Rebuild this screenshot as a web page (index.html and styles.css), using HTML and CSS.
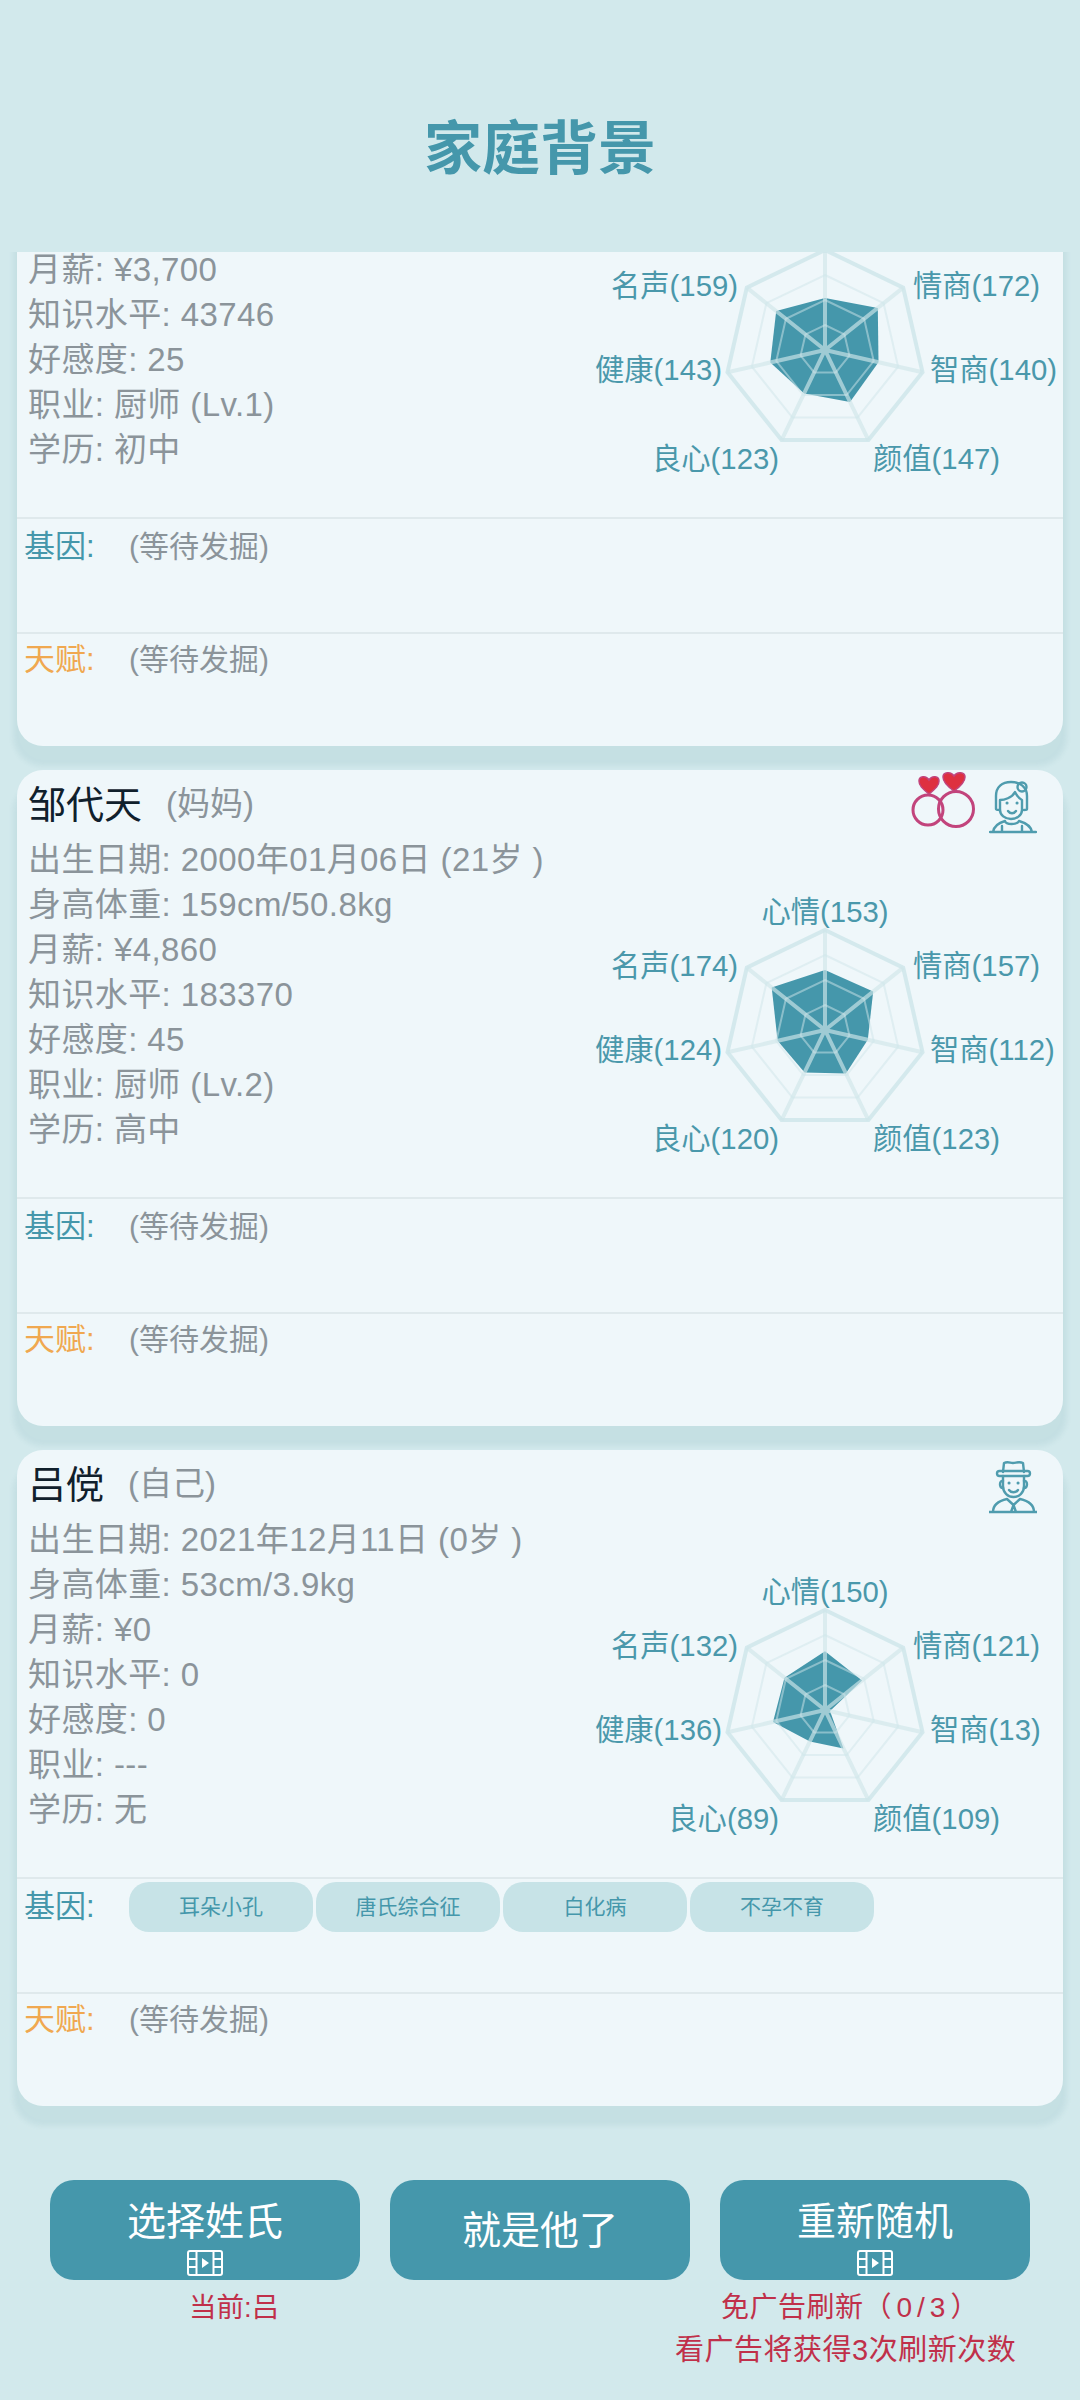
FILE: index.html
```html
<!DOCTYPE html>
<html lang="zh-CN">
<head>
    <meta charset="UTF-8">
    <title>家庭背景</title>
    <link rel="stylesheet" href="styles.css">
</head>
<body>
<svg class="defs" width="0" height="0">
    <defs>
        <g id="radarGrid">
            <polygon class="ring ring-outer" points="0,-100 78.2,-62.4 97.5,22.3 43.4,90.1 -43.4,90.1 -97.5,22.3 -78.2,-62.4"/>
            <polygon class="ring" points="0,-75 58.6,-46.8 73.1,16.7 32.5,67.6 -32.5,67.6 -73.1,16.7 -58.6,-46.8"/>
            <polygon class="ring" points="0,-50 39.1,-31.2 48.7,11.1 21.7,45 -21.7,45 -48.7,11.1 -39.1,-31.2"/>
            <polygon class="ring" points="0,-25 19.5,-15.6 24.4,5.6 10.8,22.5 -10.8,22.5 -24.4,5.6 -19.5,-15.6"/>
            <path class="spoke" d="M0 0L0 -100M0 0L78.2 -62.4M0 0L97.5 22.3M0 0L43.4 90.1M0 0L-43.4 90.1M0 0L-97.5 22.3M0 0L-78.2 -62.4"/>
        </g>
        <g id="filmIcon">
            <rect x="1" y="1" width="34" height="24" rx="2"/>
            <path d="M9.5 1V25M26.5 1V25M1 9H9.5M1 17H9.5M26.5 9H35M26.5 17H35"/>
            <polygon class="film-play" points="15,8 15,18 22,13"/>
        </g>
    </defs>
</svg>

<div class="header">
    <h1 class="title">家庭背景</h1>
</div>

<div class="list">
    <div class="card card-scrolled">
        <div class="card-head"></div>
        <div class="card-body">
            <div class="details details-scrolled">
                <div>月薪: ¥3,700</div>
                <div>知识水平: 43746</div>
                <div>好感度: 25</div>
                <div>职业: 厨师 (Lv.1)</div>
                <div>学历: 初中</div>
            </div>
            <svg class="radar" viewBox="0 0 483 290">
                <g transform="translate(245 150)">
                    <polygon class="radar-data" points="0,-52 52.8,-42.1 53.5,12.2 25,51.9 -20.9,43.4 -54.7,12.5 -48.8,-38.9"/>
                    <use href="#radarGrid"/>
                </g>
                <text x="333" y="85">情商(172)</text>
                <text x="350" y="169">智商(140)</text>
                <text x="293" y="258">颜值(147)</text>
                <text class="end" x="199" y="258">良心(123)</text>
                <text class="end" x="142" y="169">健康(143)</text>
                <text class="end" x="158" y="85">名声(159)</text>
            </svg>
        </div>
        <div class="trait-row gene-row">
            <div class="trait-label">基因:</div>
            <div class="trait-value">(等待发掘)</div>
        </div>
        <div class="trait-row talent-row">
            <div class="trait-label talent">天赋:</div>
            <div class="trait-value">(等待发掘)</div>
        </div>
    </div>

    <div class="card">
        <div class="card-head">
            <span class="name">邹代天</span>
            <span class="relation">(妈妈)</span>
            <div class="head-icons">
                <svg class="icon-rings" viewBox="0 0 64 58">
                    <circle cx="17" cy="38" r="15"/>
                    <circle cx="45" cy="37" r="17.5"/>
                    <path class="heart" d="M18 22C12 17 8 14 8 9C8 4 15 3 18 8C21 3 28 4 28 9C28 14 24 17 18 22Z"/>
                    <path class="heart" d="M43 19C36 14 32 10 32 5C32 0 40 -1 43 4C46 -1 54 0 54 5C54 10 50 14 43 19Z"/>
                </svg>
                <svg class="icon-person" viewBox="0 0 48 54">
                    <path d="M7 29V16C7 7 13 2 22 2C31 2 38 7 38 16V29C38 30 37 30 35 30M7 29C7 30 9 30 11 30"/>
                    <path d="M11 30V20C15 20 23 18 26 12C28 16 31 19 33 20V30C33 35 28 39 22 39C16 39 11 35 11 30Z"/>
                    <circle cx="33" cy="7" r="4.500"/>
                    <path d="M19 31C21 34 25 34 27 31"/>
                    <path class="dot" d="M18 23h.1M28 23h.1"/>
                    <path d="M1 52H47M4 52C5 46 9 43 16 41C17 45 28 45 30 41C37 43 42 46 43 52M13 52V46M33 52V46"/>
                </svg>
            </div>
        </div>
        <div class="card-body">
            <div class="details">
                <div>出生日期: 2000年01月06日 (21岁 )</div>
                <div>身高体重: 159cm/50.8kg</div>
                <div>月薪: ¥4,860</div>
                <div>知识水平: 183370</div>
                <div>好感度: 45</div>
                <div>职业: 厨师 (Lv.2)</div>
                <div>学历: 高中</div>
            </div>
            <svg class="radar" viewBox="0 0 483 290">
                <g transform="translate(245 150)">
                    <polygon class="radar-data" points="0,-60 48.2,-38.4 42.8,9.8 20.9,43.4 -20.4,42.4 -47.4,10.8 -53.3,-42.5"/>
                    <use href="#radarGrid"/>
                </g>
                <text class="middle" x="245" y="31">心情(153)</text>
                <text x="333" y="85">情商(157)</text>
                <text x="350" y="169">智商(112)</text>
                <text x="293" y="258">颜值(123)</text>
                <text class="end" x="199" y="258">良心(120)</text>
                <text class="end" x="142" y="169">健康(124)</text>
                <text class="end" x="158" y="85">名声(174)</text>
            </svg>
        </div>
        <div class="trait-row gene-row">
            <div class="trait-label">基因:</div>
            <div class="trait-value">(等待发掘)</div>
        </div>
        <div class="trait-row talent-row">
            <div class="trait-label talent">天赋:</div>
            <div class="trait-value">(等待发掘)</div>
        </div>
    </div>

    <div class="card">
        <div class="card-head">
            <span class="name">吕傥</span>
            <span class="relation">(自己)</span>
            <div class="head-icons">
                <svg class="icon-person" viewBox="0 0 48 54">
                    <path d="M14 12L15 3C19 1 21 3 24 3C27 3 30 1 34 3L35 12"/>
                    <rect x="8" y="11" width="33" height="5" rx="2.5"/>
                    <path d="M14 16V26C14 33 19 37 24.500 37C30 37 35 33 35 26V16"/>
                    <path d="M14 21C10 20 10 28 14 28M35 21C39 20 39 28 35 28"/>
                    <path d="M20 30C22 33 27 33 29 30"/>
                    <path class="dot" d="M20 23h.1M29 23h.1"/>
                    <path d="M0 52H48M4 52C4 45 9 41 18 39L24.500 45L31 39C40 41 45 45 45 52M24.500 45L22 52M24.500 45L27 52"/>
                </svg>
            </div>
        </div>
        <div class="card-body">
            <div class="details">
                <div>出生日期: 2021年12月11日 (0岁 )</div>
                <div>身高体重: 53cm/3.9kg</div>
                <div>月薪: ¥0</div>
                <div>知识水平: 0</div>
                <div>好感度: 0</div>
                <div>职业: ---</div>
                <div>学历: 无</div>
            </div>
            <svg class="radar" viewBox="0 0 483 290">
                <g transform="translate(245 150)">
                    <polygon class="radar-data" points="0,-58.8 37.1,-29.6 5,1.1 18.5,38.5 -15.1,31.4 -52,11.9 -40.5,-32.3"/>
                    <use href="#radarGrid"/>
                </g>
                <text class="middle" x="245" y="31">心情(150)</text>
                <text x="333" y="85">情商(121)</text>
                <text x="350" y="169">智商(13)</text>
                <text x="293" y="258">颜值(109)</text>
                <text class="end" x="199" y="258">良心(89)</text>
                <text class="end" x="142" y="169">健康(136)</text>
                <text class="end" x="158" y="85">名声(132)</text>
            </svg>
        </div>
        <div class="trait-row gene-row">
            <div class="trait-label">基因:</div>
            <div class="chips">
                <span class="chip">耳朵小孔</span>
                <span class="chip">唐氏综合征</span>
                <span class="chip">白化病</span>
                <span class="chip">不孕不育</span>
            </div>
        </div>
        <div class="trait-row talent-row">
            <div class="trait-label talent">天赋:</div>
            <div class="trait-value">(等待发掘)</div>
        </div>
    </div>
</div>

<div class="actions">
    <button class="btn btn-side btn-ad">
        选择姓氏
        <svg class="film" viewBox="0 0 36 26"><use href="#filmIcon"/></svg>
    </button>
    <button class="btn btn-main">就是他了</button>
    <button class="btn btn-side btn-ad">
        重新随机
        <svg class="film" viewBox="0 0 36 26"><use href="#filmIcon"/></svg>
    </button>
</div>

<div class="notes">
    <div class="note-surname">当前:吕</div>
    <div class="note-refresh">
        <div class="note-count">免广告刷新<span class="note-tally">（0/3）</span></div>
        <div>看广告将获得3次刷新次数</div>
    </div>
</div>
</body>
</html>
```

FILE: styles.css
```css
* {
    box-sizing: border-box;
}

body {
    margin: 0;
    width: 1080px;
    height: 2400px;
    overflow: hidden;
    background-color: #d2e9ec;
    font-family: "Liberation Sans", "Noto Sans CJK SC", sans-serif;
    color: #8b949a;
}

.defs {
    position: absolute;
}

.header {
    height: 252px;
    display: flex;
    justify-content: center;
    padding-top: 110px;
}

.title {
    margin: 0;
    font-size: 58px;
    line-height: 78px;
    font-weight: 700;
    color: #4597ab;
}

.list {
    height: 1878px;
    overflow: hidden;
    padding: 0 17px;
    display: flex;
    flex-direction: column;
    gap: 24px;
}

.card {
    flex: none;
    height: 656px;
    background-color: #eff7fa;
    border-radius: 26px;
    box-shadow: 0 16px 5px 4px rgba(70, 130, 140, 0.09);
}

.card-scrolled {
    margin-top: -162px;
}

.card-head {
    height: 67px;
    display: flex;
    align-items: center;
    padding: 0 26px 5px 11px;
}

.name {
    font-size: 38px;
    color: #10202c;
    margin-right: 24px;
}

.relation {
    font-size: 33px;
}

.head-icons {
    margin-left: auto;
    align-self: flex-start;
    display: flex;
    align-items: flex-start;
    gap: 14px;
}

.icon-rings {
    width: 64px;
    height: 58px;
    margin-top: 2px;
    overflow: visible;
    fill: none;
    stroke: #c2447c;
    stroke-width: 3;
}

.icon-rings .heart {
    fill: #de3040;
    stroke-width: 1.5;
}

.icon-person {
    width: 48px;
    height: 54px;
    margin-top: 10px;
    fill: none;
    stroke: #4f9cae;
    stroke-width: 2.4;
    stroke-linecap: round;
    stroke-linejoin: round;
}

.icon-person .dot {
    stroke-width: 3;
}

.card-body {
    height: 360px;
    display: flex;
    justify-content: space-between;
}

.details {
    padding-left: 11px;
    font-size: 33px;
    line-height: 45px;
    letter-spacing: 0.4px;
    white-space: nowrap;
}

.details-scrolled {
    padding-top: 90px;
}

.radar {
    flex: none;
    width: 483px;
    height: 290px;
    margin-top: 43px;
    overflow: visible;
}

.radar text {
    font-size: 29.3px;
    fill: #4a98ab;
    dominant-baseline: central;
}

.radar text.end {
    text-anchor: end;
}

.radar text.middle {
    text-anchor: middle;
}

.radar-data {
    fill: #4597ab;
}

.ring {
    fill: none;
    stroke: #cfe6ea;
    stroke-opacity: 0.5;
    stroke-width: 2;
}

.ring-outer {
    stroke-opacity: 0.85;
    stroke-width: 4;
}

.spoke {
    fill: none;
    stroke: #cfe6ea;
    stroke-opacity: 0.65;
    stroke-width: 4;
}

.trait-row {
    display: flex;
    align-items: flex-start;
    border-top: 2px solid #dfe9ec;
    padding-left: 7px;
    font-size: 30px;
    line-height: 50px;
}

.gene-row {
    height: 115px;
    padding-top: 3px;
}

.talent-row {
    height: 114px;
    padding-top: 1px;
}

.trait-label {
    width: 105px;
    font-size: 31px;
    color: #4597ab;
}

.trait-label.talent {
    color: #f0a850;
}

.chips {
    display: flex;
    gap: 3px;
}

.chip {
    width: 184px;
    height: 50px;
    border-radius: 20px;
    background-color: #c7e3e7;
    color: #4597ab;
    font-size: 21px;
    text-align: center;
}

.actions {
    display: flex;
    gap: 30px;
    padding: 50px 50px 0;
}

.btn {
    height: 100px;
    padding: 0;
    border: none;
    border-radius: 24px;
    background-color: #4597ab;
    color: #fff;
    font-family: inherit;
    font-size: 39px;
    line-height: 50px;
    display: flex;
    flex-direction: column;
    align-items: center;
    justify-content: center;
}

.btn-side {
    width: 310px;
}

.btn-main {
    width: 300px;
    padding-top: 2px;
}

.btn-ad {
    justify-content: flex-start;
    padding-top: 17px;
}

.film {
    width: 36px;
    height: 26px;
    margin-top: 3px;
    fill: none;
    stroke: #fff;
    stroke-width: 2;
}

.film-play {
    fill: #fff;
    stroke: none;
}

.notes {
    display: flex;
    padding: 6px 0 0 189px;
    font-size: 29px;
    letter-spacing: 0.5px;
    line-height: 43px;
    color: #c0304a;
}

.note-surname {
    width: 90px;
    font-size: 27.5px;
    letter-spacing: 0;
    white-space: nowrap;
}

.note-refresh {
    margin-left: 396px;
    white-space: nowrap;
}

.note-count {
    padding-left: 46px;
    font-size: 28px;
}

.note-tally {
    letter-spacing: 5px;
}
```
